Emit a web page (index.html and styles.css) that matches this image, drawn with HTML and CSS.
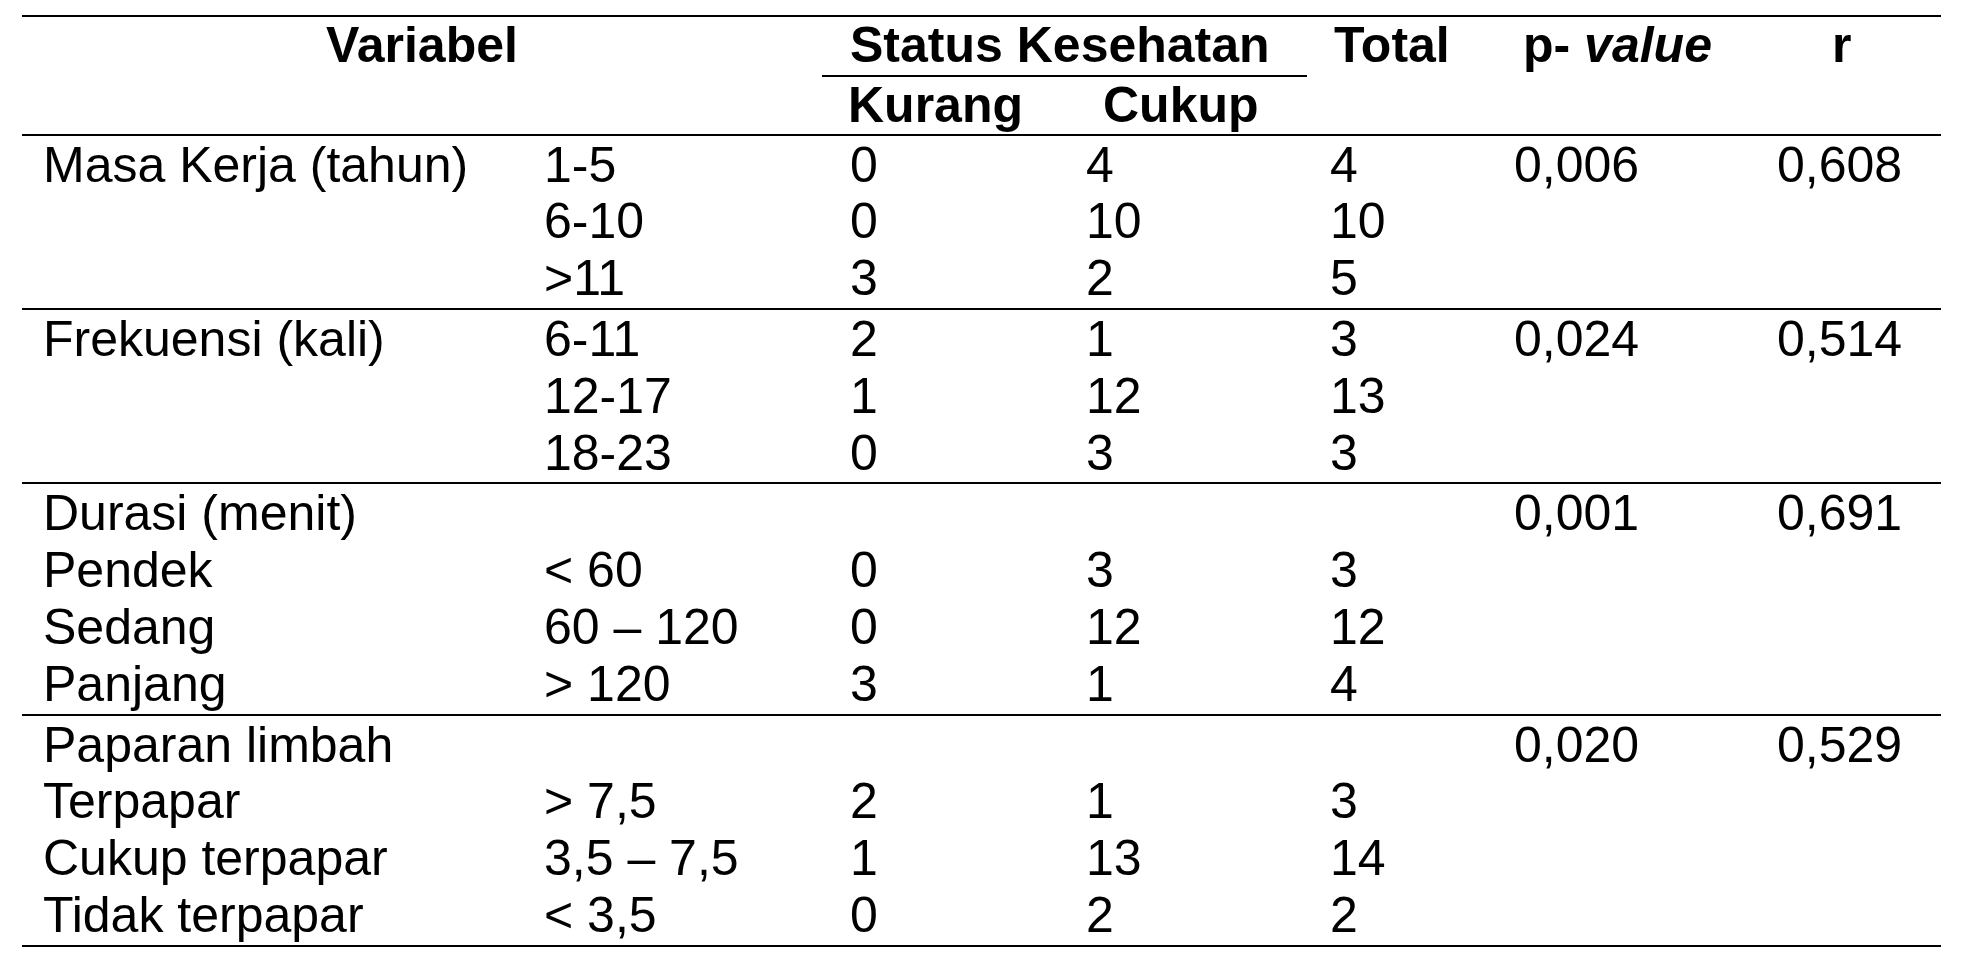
FILE: index.html
```html
<!DOCTYPE html>
<html lang="id">
<head>
<meta charset="utf-8">
<title>Tabel Status Kesehatan</title>
<link rel="stylesheet" href="styles.css">
</head>
<body>
<table class="tbl">
  <colgroup>
    <col class="w1"><col class="w2"><col class="w3"><col class="w4"><col class="w5"><col class="w6"><col class="w7">
  </colgroup>
  <thead>
    <tr class="hd-top">
      <th class="h-var" colspan="2" rowspan="2">Variabel</th>
      <th class="h-status" colspan="2">Status Kesehatan</th>
      <th class="h-total" rowspan="2">Total</th>
      <th class="h-pval" rowspan="2">p- <em>value</em></th>
      <th class="h-r" rowspan="2">r</th>
    </tr>
    <tr class="hd-sub">
      <th class="h-kurang">Kurang</th>
      <th class="h-cukup">Cukup</th>
    </tr>
  </thead>
  <tbody>
    <tr><td>Masa Kerja (tahun)</td><td>1-5</td><td>0</td><td>4</td><td>4</td><td>0,006</td><td>0,608</td></tr>
    <tr><td></td><td>6-10</td><td>0</td><td>10</td><td>10</td><td></td><td></td></tr>
    <tr><td></td><td>&gt;11</td><td>3</td><td>2</td><td>5</td><td></td><td></td></tr>
  </tbody>
  <tbody>
    <tr><td>Frekuensi (kali)</td><td>6-11</td><td>2</td><td>1</td><td>3</td><td>0,024</td><td>0,514</td></tr>
    <tr><td></td><td>12-17</td><td>1</td><td>12</td><td>13</td><td></td><td></td></tr>
    <tr><td></td><td>18-23</td><td>0</td><td>3</td><td>3</td><td></td><td></td></tr>
  </tbody>
  <tbody>
    <tr><td>Durasi (menit)</td><td></td><td></td><td></td><td></td><td>0,001</td><td>0,691</td></tr>
    <tr><td>Pendek</td><td>&lt; 60</td><td>0</td><td>3</td><td>3</td><td></td><td></td></tr>
    <tr><td>Sedang</td><td>60 – 120</td><td>0</td><td>12</td><td>12</td><td></td><td></td></tr>
    <tr><td>Panjang</td><td>&gt; 120</td><td>3</td><td>1</td><td>4</td><td></td><td></td></tr>
  </tbody>
  <tbody>
    <tr><td>Paparan limbah</td><td></td><td></td><td></td><td></td><td>0,020</td><td>0,529</td></tr>
    <tr><td>Terpapar</td><td>&gt; 7,5</td><td>2</td><td>1</td><td>3</td><td></td><td></td></tr>
    <tr><td>Cukup terpapar</td><td>3,5 – 7,5</td><td>1</td><td>13</td><td>14</td><td></td><td></td></tr>
    <tr><td>Tidak terpapar</td><td>&lt; 3,5</td><td>0</td><td>2</td><td>2</td><td></td><td></td></tr>
  </tbody>
</table>
</body>
</html>
```

FILE: styles.css
```css
html, body {
  margin: 0;
  padding: 0;
  background: #ffffff;
}

body {
  font-family: "Liberation Sans", Arial, Helvetica, sans-serif;
  color: #000000;
}

.tbl {
  margin: 15px 0 0 22px;
  width: 1919px;
  table-layout: fixed;
  border-collapse: separate;
  border-spacing: 0;
  font-size: 50px;
  line-height: 56.8px;
}

.w1 { width: 504px; }
.w2 { width: 296px; }
.w3 { width: 246px; }
.w4 { width: 239px; }
.w5 { width: 185px; }
.w6 { width: 263px; }
.w7 { width: 186px; }

.tbl th,
.tbl td {
  padding: 0;
  text-align: left;
  vertical-align: top;
  white-space: nowrap;
  font-weight: normal;
}

/* header */
.tbl th {
  font-weight: bold;
}

.tbl th em {
  font-style: italic;
}

.tbl .hd-top th {
  border-top: 2px solid #000;
}

.tbl .hd-sub th,
.tbl th[rowspan] {
  border-bottom: 2px solid #000;
}

.tbl th.h-var {
  text-align: center;
}

.tbl th.h-status {
  padding: 0 0 1px 28px;
  border-bottom: 2px solid #000;
}

.tbl th.h-total {
  padding-left: 27px;
}

.tbl th.h-pval {
  padding-left: 31px;
}

.tbl th.h-r {
  padding-left: 77px;
}

.tbl th.h-kurang {
  padding-left: 26px;
}

.tbl th.h-cukup {
  padding-left: 35px;
}

/* body */
.tbl td:nth-child(1) { padding-left: 21px; }
.tbl td:nth-child(2) { padding-left: 18px; }
.tbl td:nth-child(3) { padding-left: 28px; }
.tbl td:nth-child(4) { padding-left: 18px; }
.tbl td:nth-child(5) { padding-left: 23px; }
.tbl td:nth-child(6) { padding-left: 22px; }
.tbl td:nth-child(7) { padding-left: 22px; }

.tbl tbody tr:first-child td {
  padding-top: 1px;
}

.tbl tbody tr:last-child td {
  padding-bottom: 1px;
}

.tbl tbody + tbody tr:first-child td {
  border-top: 2px solid #000;
}

.tbl tbody:last-child tr:last-child td {
  border-bottom: 2px solid #000;
}
```
